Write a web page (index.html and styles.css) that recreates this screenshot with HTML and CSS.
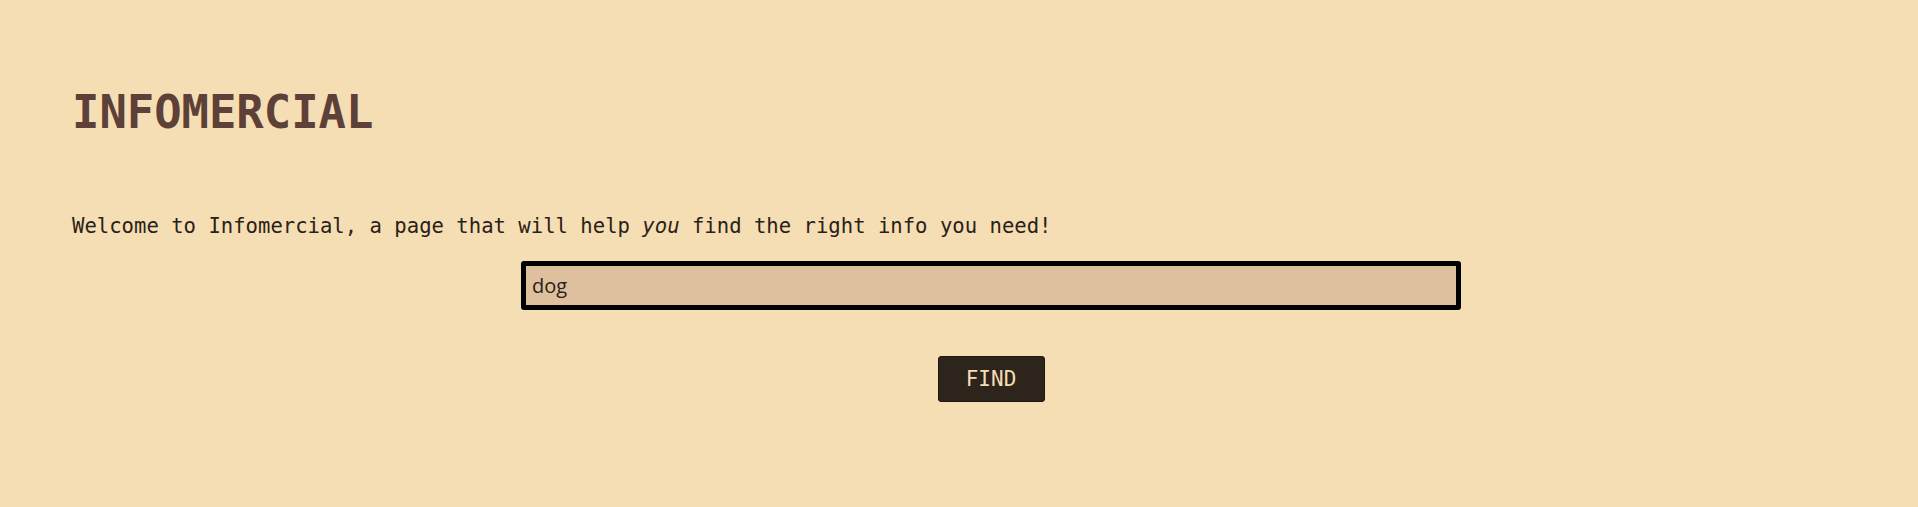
FILE: index.html
```html
<!DOCTYPE html>
<html lang="en">
<head>
<meta charset="utf-8">
<title>Infomercial</title>
<link rel="stylesheet" href="styles.css">
</head>
<body>
<main class="page">
  <h1 class="title">INFOMERCIAL</h1>
  <p class="intro">Welcome to Infomercial, a page that will help <em>you</em> find the right info you need!</p>
  <form class="search">
    <input class="search-input" type="text" value="dog">
    <button class="search-btn" type="button">FIND</button>
  </form>
</main>
</body>
</html>
```

FILE: styles.css
```css
html, body {
  margin: 0;
  padding: 0;
  background: #f5deb3;
}
body {
  font-family: "DejaVu Sans Mono", "Liberation Mono", monospace;
  color: #2a2118;
}
.page {
  padding: 86px 8px 0 72px;
  display: flex;
  flex-direction: column;
}
.title {
  margin: 0;
  font-size: 45.5px;
  line-height: 54px;
  font-weight: bold;
  color: #5d4037;
}
.intro {
  margin: 74px 0 0 0;
  font-size: 20.6px;
  line-height: 24px;
}
.intro em {
  font-style: italic;
}
.search {
  margin-top: 23px;
  display: flex;
  flex-direction: column;
  align-items: center;
  gap: 46px;
}
.search-input {
  box-sizing: border-box;
  width: 940px;
  height: 49px;
  border: 5px solid #000;
  border-radius: 3px;
  background: #dfc09e;
  padding: 0 6px;
  font-family: "Open Sans", "Liberation Sans", sans-serif;
  font-size: 20px;
  color: #2a2118;
  outline: none;
}
.search-btn {
  box-sizing: border-box;
  width: 107px;
  height: 46px;
  border: 1px solid #1e1810;
  border-radius: 3px;
  background: #2d251b;
  color: #f5deb3;
  font-family: "DejaVu Sans Mono", "Liberation Mono", monospace;
  font-size: 21px;
  padding: 0;
}
```
